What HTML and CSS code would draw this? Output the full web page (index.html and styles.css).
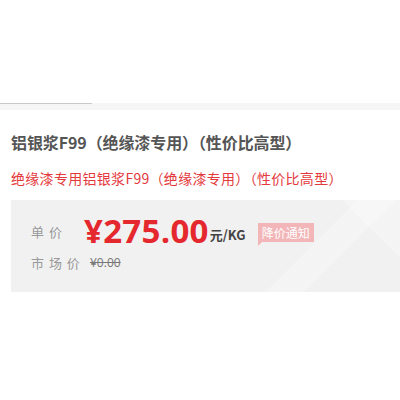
FILE: index.html
```html
<!DOCTYPE html>
<html lang="zh">
<head>
<meta charset="utf-8">
<link rel="stylesheet" href="styles.css">
</head>
<body>
<div class="scrollbar"><div class="thumb"></div></div>
<div class="info">
  <h1 class="title">铝银浆F99（绝缘漆专用）（性价比高型）</h1>
  <p class="subtitle">绝缘漆专用铝银浆F99（绝缘漆专用）（性价比高型）</p>
  <div class="pricebox">
    <div class="row main">
      <span class="label">单 价</span>
      <span class="price">¥275.00</span>
      <span class="unit">元/KG</span>
      <span class="notify">降价通知</span>
    </div>
    <div class="row second">
      <span class="label">市 场 价</span>
      <span class="old">¥0.00</span>
    </div>
  </div>
</div>
</body>
</html>
```
FILE: styles.css
```css
html, body { margin: 0; padding: 0; background: #fff; }
body { font-family: "Noto Sans CJK SC", "Noto Sans", sans-serif; width: 400px; height: 400px; overflow: hidden; }
.scrollbar { margin-top: 103px; height: 7px; background: #f6f6f6; }
.thumb { width: 92px; height: 1px; background: #c9c9c9; }
.info { padding-left: 11px; }
.title { margin: 21px 0 0; font-size: 16px; line-height: 22px; font-weight: bold; color: #555; letter-spacing: -0.1px; }
.subtitle { margin: 15px 0 0; font-size: 14px; line-height: 20px; color: #e4393c; letter-spacing: 0.3px; }
.pricebox { margin-top: 12px; height: 92px; background: #f1f1f1; padding: 16px 0 0 20px; box-sizing: border-box;
  background-image: linear-gradient(135deg, transparent 72%, rgba(255,255,255,0.25) 72%, rgba(255,255,255,0.25) 80%, transparent 80%), linear-gradient(45deg, transparent 88%, rgba(255,255,255,0.25) 88%); }
.row { display: flex; align-items: center; }
.label { width: 53px; font-size: 13px; color: #999; letter-spacing: 1px; }
.main { height: 30px; }
.price { font-family: "Open Sans", "Noto Sans", sans-serif; font-size: 33px; font-weight: 700; color: #e4282d; letter-spacing: 0.3px; line-height: 30px; }
.unit { font-size: 13px; font-weight: bold; color: #444; margin-left: 1px; margin-top: 6px; }
.notify { position: relative; margin-left: 12px; background: #f2b6b8; color: #fff; font-size: 12px; line-height: 19px; padding: 0 4px; margin-top: 2px; }
.notify::after { content: ""; position: absolute; left: 0; bottom: -4px; border-top: 4px solid #f2b6b8; border-right: 4px solid transparent; }
.second { margin-top: 7px; }
.old { margin-left: 6px; font-family: "Open Sans", sans-serif; font-size: 12px; color: #777; text-decoration: line-through; }
```
